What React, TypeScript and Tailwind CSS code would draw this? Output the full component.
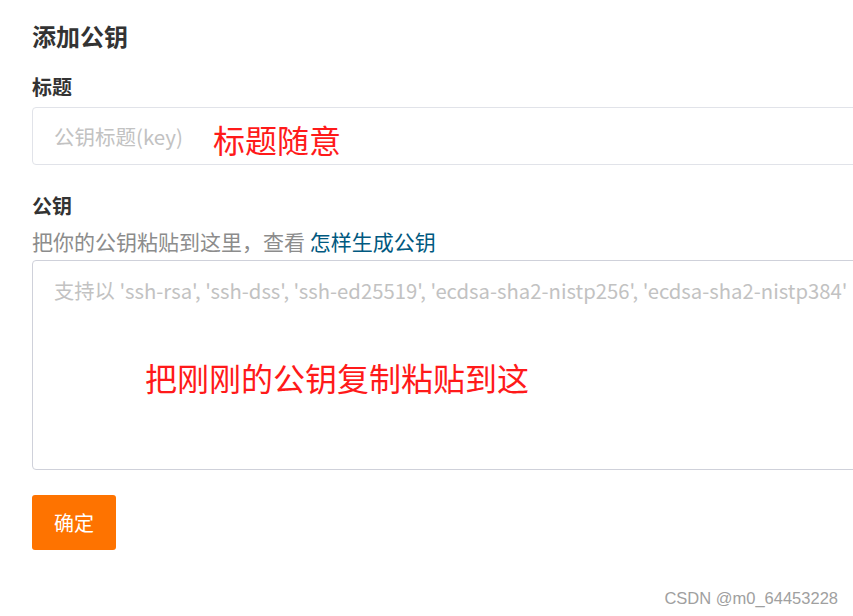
import { useState } from 'react'

const font = { fontFamily: '"Noto Sans CJK SC", "Noto Sans", sans-serif' }

export default function App() {
  const [title, setTitle] = useState('')
  const [key, setKey] = useState('')

  return (
    <div className="relative h-[616px] w-full overflow-hidden bg-white" style={font}>
      <div className="w-[880px] pl-8 pt-5">
        <h2 className="text-[24px] leading-[32px] font-bold text-[#333]">添加公钥</h2>

        <label className="mt-[21px] block text-[20px] leading-[28px] font-bold text-[#333]">标题</label>
        <div className="relative mt-[6px]">
          <input
            value={title}
            onChange={(e) => setTitle(e.target.value)}
            placeholder="公钥标题(key)"
            className="h-[58px] w-full rounded-[4px] border border-[#e1e3e9] px-[21px] text-[20.5px] text-[#333] outline-none placeholder:text-[#c2c2c2]"
          />
          <span className="pointer-events-none absolute top-[12px] left-[181px] text-[32px] leading-[40px] text-[#ff1a1a]">
            标题随意
          </span>
        </div>

        <label className="mt-[27px] block text-[20px] leading-[28px] font-bold text-[#333]">公钥</label>
        <p className="mt-[7px] text-[21px] leading-[28px] text-[#8c8c8c]">
          把你的公钥粘贴到这里，查看 <a className="text-[#005980]">怎样生成公钥</a>
        </p>
        <div className="relative mt-[5px]">
          <textarea
            value={key}
            onChange={(e) => setKey(e.target.value)}
            placeholder="支持以 'ssh-rsa', 'ssh-dss', 'ssh-ed25519', 'ecdsa-sha2-nistp256', 'ecdsa-sha2-nistp384'"
            className="block h-[210px] w-full resize-none rounded-[4px] border border-[#cfd1da] px-[21px] py-[15px] text-[20.3px] leading-[28px] text-[#333] outline-none placeholder:text-[#c2c2c2]"
          />
          <span className="pointer-events-none absolute top-[97px] left-[113px] text-[32px] leading-[40px] text-[#ff1a1a]">
            把刚刚的公钥复制粘贴到这
          </span>
        </div>

        <button className="mt-[25px] h-[55px] w-[84px] rounded-[3px] bg-[#fe7300] text-[20px] text-white">
          确定
        </button>
      </div>

      <span
        className="absolute right-[15px] bottom-[8px] text-[16.5px] leading-[20px] text-[#a0a0a0]"
        style={{ fontFamily: '"Liberation Sans", Arial, sans-serif' }}
      >
        CSDN @m0_64453228
      </span>
    </div>
  )
}
